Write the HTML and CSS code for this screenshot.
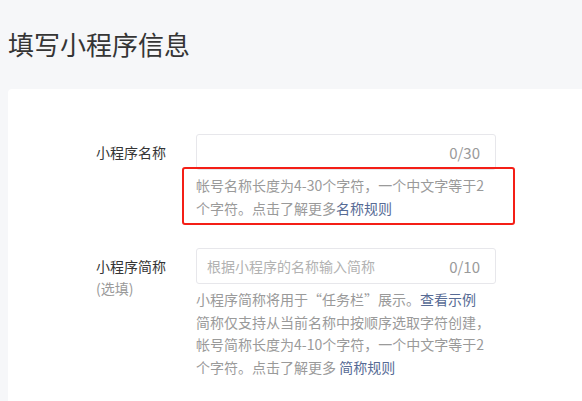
FILE: index.html
```html
<!DOCTYPE html>
<html lang="zh-CN">
<head>
<meta charset="utf-8">
<title>填写小程序信息</title>
<link rel="stylesheet" href="styles.css">
</head>
<body>
<h1 class="title">填写小程序信息</h1>
<div class="card">
  <div class="field">
    <div class="label">小程序名称</div>
    <div class="control">
      <div class="input"><span class="placeholder"></span><span class="count">0/30</span></div>
      <div class="hint annotated">帐号名称长度为4-30个字符，一个中文字等于2个字符。点击了解更多<a class="link" href="#">名称规则</a><span class="mark"></span></div>
    </div>
  </div>
  <div class="field">
    <div class="label">小程序简称<br><span class="optional">(选填)</span></div>
    <div class="control">
      <div class="input"><span class="placeholder">根据小程序的名称输入简称</span><span class="count">0/10</span></div>
      <div class="hint">小程序简称将用于“任务栏”展示。<a class="link" href="#">查看示例</a><br>简称仅支持从当前名称中按顺序选取字符创建，帐号简称长度为4-10个字符，一个中文字等于2个字符。点击了解更多 <a class="link" href="#">简称规则</a></div>
    </div>
  </div>
</div>
</body>
</html>
```

FILE: styles.css
```css
html, body {
  margin: 0;
  padding: 0;
}

body {
  background: #f6f7f9;
  font-family: "Noto Sans CJK SC", "Noto Sans", sans-serif;
  color: #353535;
  padding: 26px 0 0 8px;
  overflow: hidden;
  height: 401px;
  box-sizing: border-box;
}

.title {
  margin: 0;
  font-size: 26px;
  font-weight: 400;
  line-height: 36px;
  color: #353535;
}

.card {
  margin-top: 27px;
  background: #ffffff;
  border-radius: 4px 0 0 0;
  padding: 45px 0 23px 88px;
}

.field {
  display: flex;
  align-items: flex-start;
}

.field + .field {
  margin-top: 29px;
}

.label {
  width: 100px;
  flex: none;
  font-size: 14px;
  line-height: 22px;
  padding-top: 7px;
  color: #353535;
}

.optional {
  color: #9a9a9a;
}

.control {
  width: 300px;
  flex: none;
}

.input {
  height: 36px;
  box-sizing: border-box;
  border: 1px solid #e7e7eb;
  border-radius: 3px;
  display: flex;
  align-items: center;
  justify-content: space-between;
  padding: 0 15px 0 10px;
}

.placeholder {
  font-size: 14px;
  color: #b2b2b2;
}

.count {
  font-size: 15px;
  color: #9a9a9a;
}

.hint {
  margin-top: 4px;
  font-size: 14px;
  line-height: 22.5px;
  color: #9a9a9a;
}

.link {
  color: #576b95;
  text-decoration: none;
}

.annotated {
  position: relative;
}

.mark {
  position: absolute;
  top: -7px;
  left: -14px;
  right: -19px;
  bottom: -6px;
  border: 2.5px solid #f41f17;
  border-radius: 3px;
  pointer-events: none;
}
```
